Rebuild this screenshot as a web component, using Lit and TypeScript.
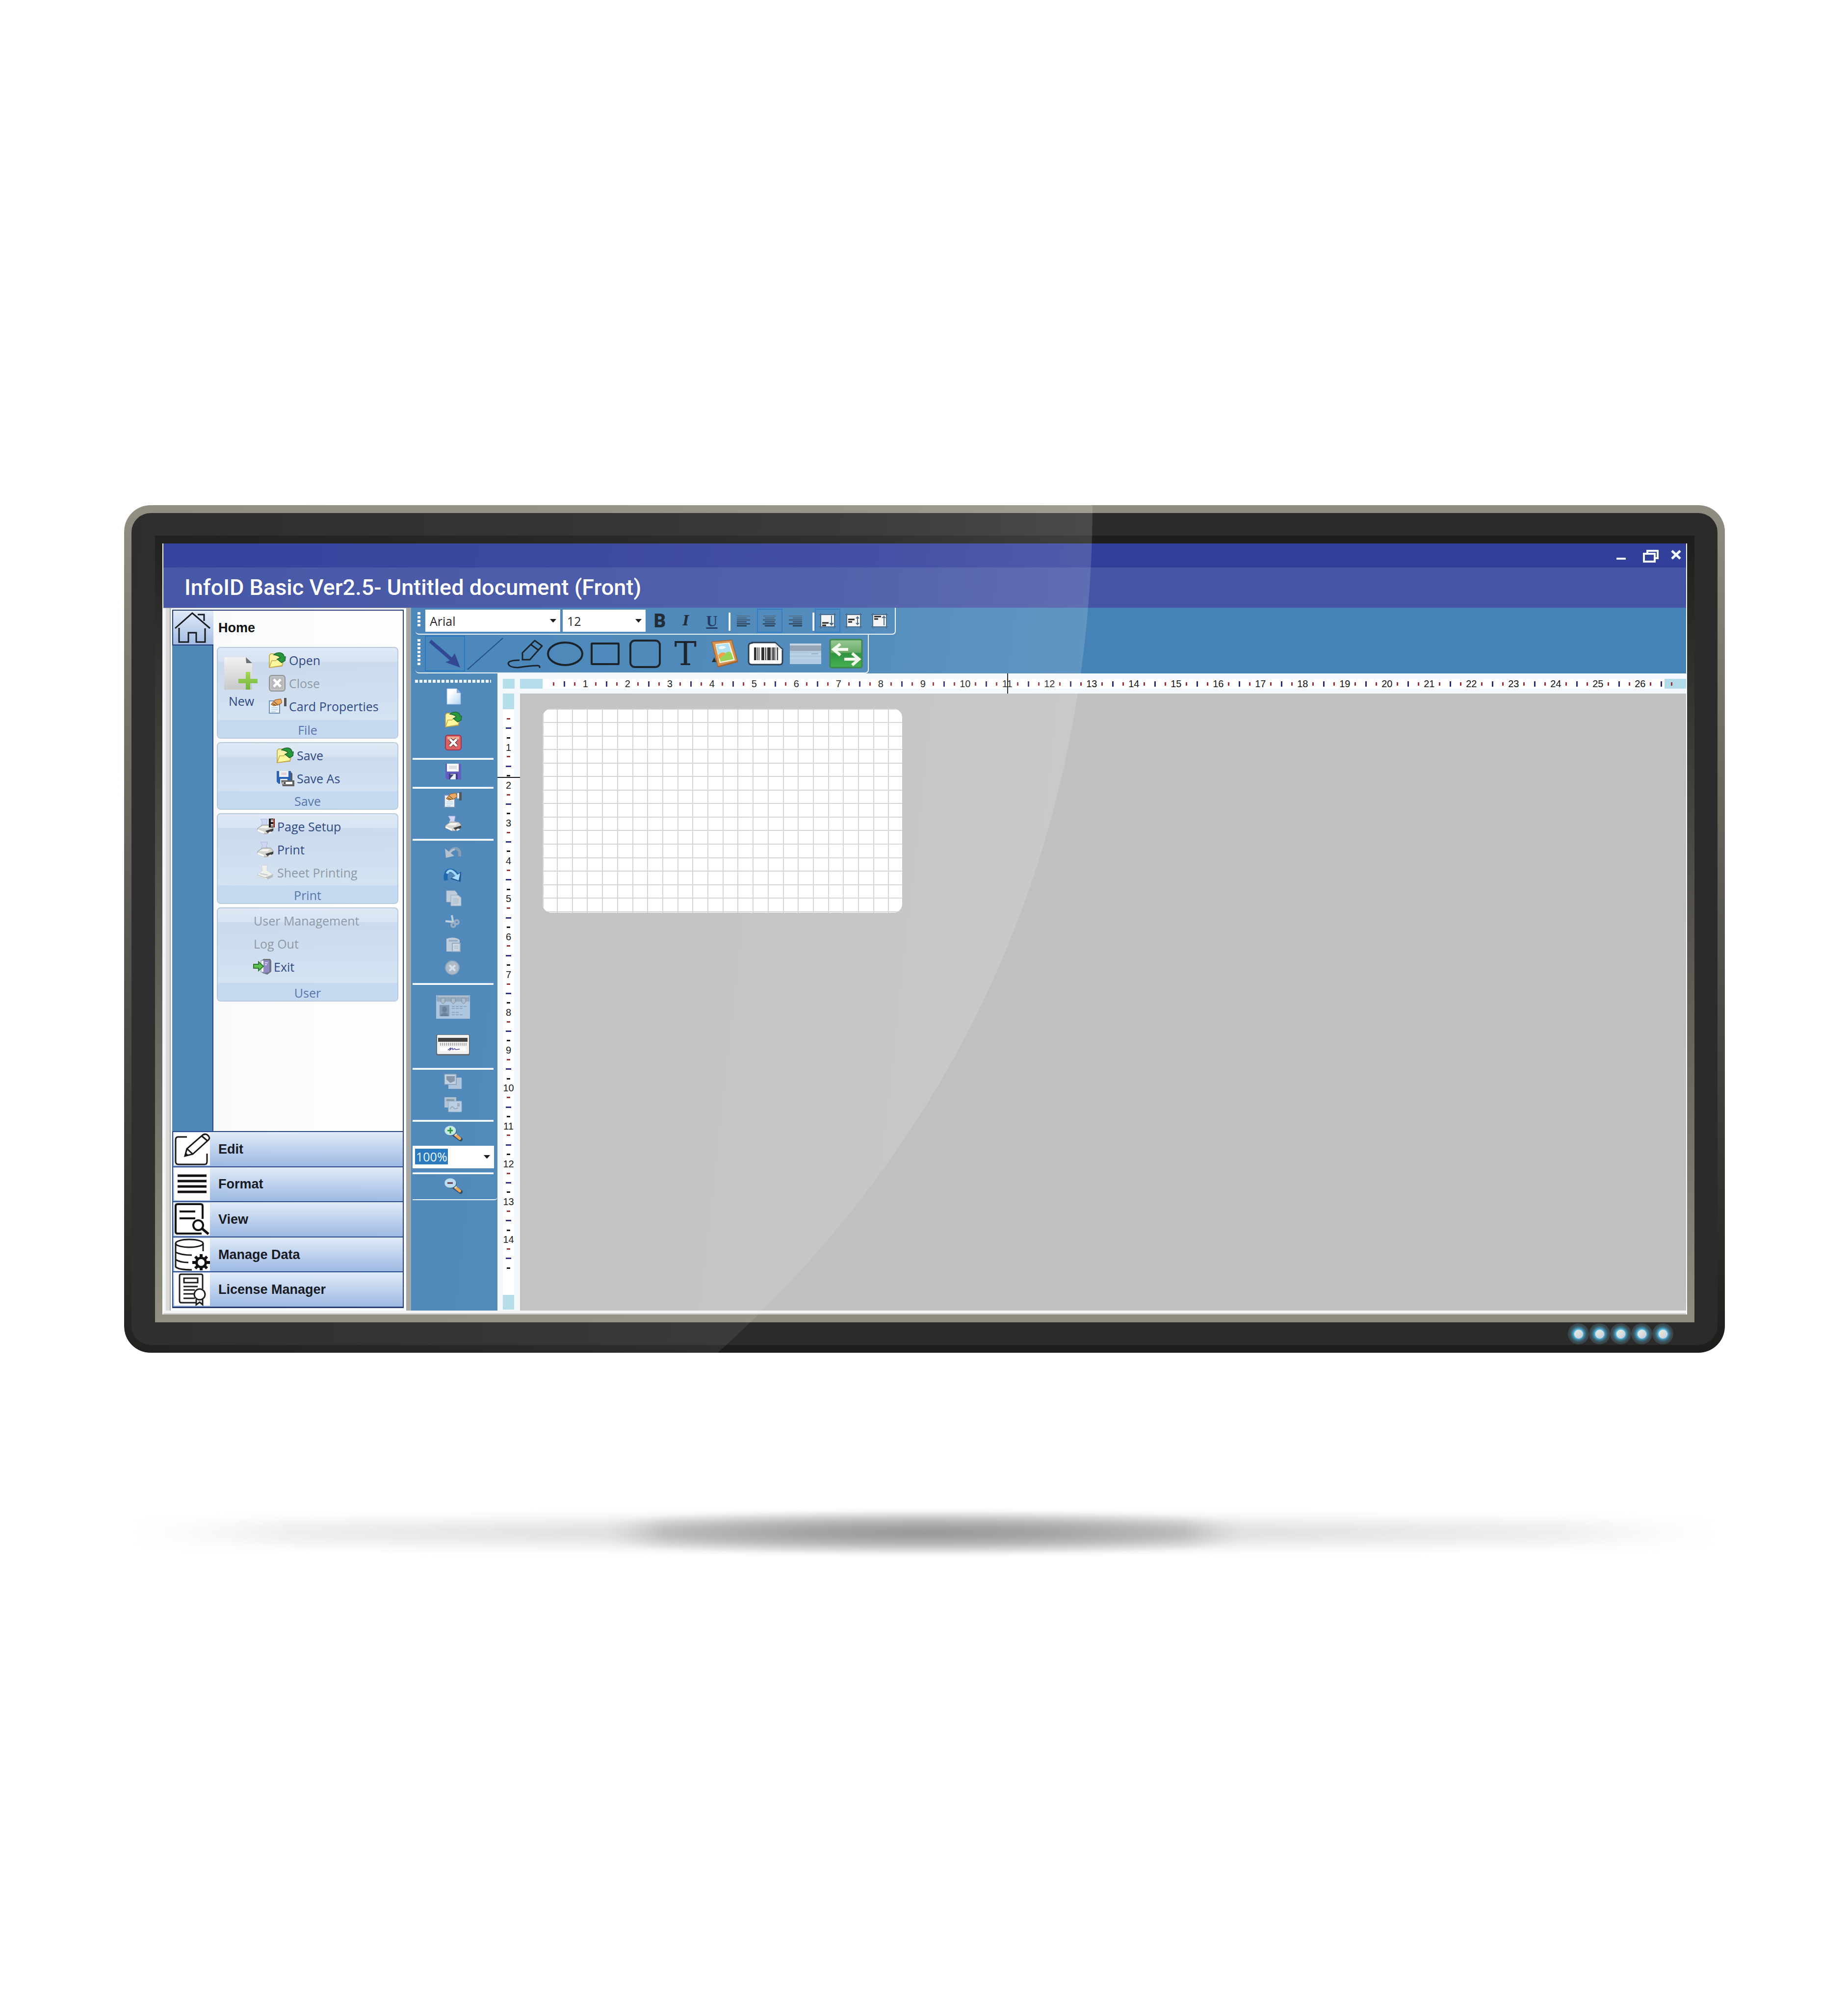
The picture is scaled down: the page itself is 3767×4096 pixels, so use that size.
import { LitElement, html, svg, css, nothing, TemplateResult } from "lit";
import { customElement, property } from "lit/decorators.js";
import { classMap } from "lit/directives/class-map.js";

/* ---------- icon drawings ---------- */

type Art = { w: number; h: number; art: TemplateResult };

const folder = svg`
  <path d="M1 31V6L4 3H12L15 6H24V12L30 17L27 28Z" fill="#fbf3a0" stroke="#b89c3c" stroke-width="1.5"/>
  <path d="M1 31L6 17H14L18 14H30L27 27Z" fill="#fff89a" stroke="#c2a548" stroke-width="1.5"/>
  <path d="M10 5Q16 0 24 1Q31 3 31 9L34 9L33 17L26 21L17 14L23 11Q20 6 10 5Z" fill="#219437" stroke="#17602a" stroke-width="1.5"/>`;

const printer = svg`
  <path d="M7 1H21L19 11L26 15H8L11 8Z" fill="#cfd4f2" stroke="#a9b3e2" stroke-width="1"/>
  <path d="M1 20L11 13H28L33 19V24L20 31H14L1 24Z" fill="#d3d3cf" stroke="#8d8d8d" stroke-width="1"/>
  <path d="M4 19L12 15H26L22 20Z" fill="#f4f4ef"/>
  <path d="M1 22L14 27V31L1 25Z" fill="#fff"/>
  <path d="M17 25L33 20V25L22 30Z" fill="#3c3c3c"/>
  <path d="M22 29L27 26L31 28L25 31Z" fill="#e8e8e8"/>`;

const handCard = svg`
  <path d="M1 6H22V31H1Z" fill="#edf3fb" stroke="#6d8db8" stroke-width="2"/>
  <path d="M5 20H18M5 24H18M5 28H14" stroke="#a9cdea" stroke-width="1.5"/>
  <path d="M5 13L13 4L24 2L27 9L20 14L10 16Z" fill="#eaa75c" stroke="#a4672c" stroke-width="1.5"/>
  <path d="M8 12L14 15M11 8L18 14" stroke="#6a4c2c" stroke-width="1.5"/>
  <path d="M27 2H31V13H27Z" fill="#e8e8e8"/>
  <path d="M31 0H36V17H31Z" fill="#4e4e4e"/>`;

const lens = (sign: TemplateResult, tint: string) => svg`
  <path d="M18 18L32 28" stroke="#24435e" stroke-width="8" stroke-linecap="round"/>
  <path d="M19 17L30 26" stroke="#e9a055" stroke-width="6" stroke-linecap="round"/>
  <path d="M19 16L23 19" stroke="#f5e6c8" stroke-width="4"/>
  <ellipse cx="13" cy="11" rx="11" ry="10" fill="#2d5a80"/>
  <ellipse cx="11" cy="10" rx="11" ry="9" fill="${tint}" stroke="#b9dcec" stroke-width="1.5"/>
  ${sign}`;

const bars = (rows: number[][]) => rows.map(
  ([x1, x2], i) => svg`<path d="M${x1} ${2 + i * 4}H${x2}" stroke="${["#47637c", "#3c566e", "#2f465c", "#22364a", "#18293a", "#0f1c2a"][i]}" stroke-width="2"/>`);

const cell = (inner: TemplateResult) => svg`
  <path d="M3 3H31V28H3Z" fill="#f2f4f6"/>
  <path d="M0 3H34M0 28H34M3 0V31M31 0V31" stroke="#3c5f80" stroke-width="2"/>
  ${inner}`;

const ART: Record<string, Art> = {
  home: { w: 73, h: 63, art: svg`
    <g fill="none" stroke="#101418" stroke-width="3">
      <path d="M1 33L36 2L72 33"/><path d="M47 5H60V18"/>
      <path d="M9 32V61H28V42H44V61H62V33"/></g>` },
  edit: { w: 73, h: 66, art: svg`
    <g fill="none" stroke="#111" stroke-width="3">
      <path d="M26 8H8Q3 8 3 14V58Q3 64 9 64H62Q67 64 67 58V42"/>
      <path d="M22 47L26 32L56 6Q62 0 68 4Q75 10 69 15L38 43Z"/>
      <path d="M26 32L38 43M56 6L68 16"/></g><path d="M22 48L24 40L29 45Z" fill="#111"/>` },
  format: { w: 73, h: 66, art: svg`
    <path d="M7 16H66M7 27H66M7 38H66M7 49H66" stroke="#0b0b0b" stroke-width="5"/>` },
  view: { w: 73, h: 66, art: svg`
    <g fill="none" stroke="#0d0d0d" stroke-width="4">
      <path d="M58 32V6Q58 2 54 2H7Q3 2 3 6V58Q3 62 7 62H56"/>
      <path d="M11 17H43M11 31H43"/>
      <circle cx="49" cy="45" r="10"/><path d="M57 52L70 63" stroke-width="5"/></g>` },
  data: { w: 73, h: 66, art: svg`
    <g fill="none" stroke="#111" stroke-width="3">
      <ellipse cx="31" cy="10" rx="28" ry="8"/>
      <path d="M3 10V58Q10 64 36 64M59 10V26M3 28Q14 34 36 34M3 43Q12 49 29 49"/></g>
    <g stroke="#0b0b0b" stroke-width="6">
      <path d="M55 32V65M37 49H73M43 37L67 61M67 37L43 61"/></g>
    <circle cx="55" cy="49" r="12" fill="#0b0b0b"/><circle cx="55" cy="49" r="7" fill="#fff"/>` },
  license: { w: 73, h: 66, art: svg`
    <g fill="none" stroke="#1a1717" stroke-width="3">
      <path d="M44 60H15Q11 60 11 56V5Q11 2 14 2H55Q58 2 58 5V32"/>
      <path d="M20 10H48V19H20Z"/>
      <path d="M19 27H48M19 34H42M19 42H40M19 51H42"/>
      <circle cx="52" cy="43" r="11" fill="#fff"/>
      <path d="M45 53V64L52 59L58 64V53"/></g>` },

  newDoc: { w: 69, h: 66, art: svg`
    <defs><linearGradient id="nd" x1="0" y1="0" x2="0" y2="1"><stop offset="0" stop-color="#f2f2f4"/><stop offset="1" stop-color="#c6c7c9"/></linearGradient>
    <linearGradient id="np" x1="0" y1="0" x2="0" y2="1"><stop offset="0" stop-color="#a2d651"/><stop offset="1" stop-color="#6cb33c"/></linearGradient></defs>
    <path d="M0 0H44L57 12V66H0Z" fill="url(#nd)"/><path d="M44 0L57 12H45Z" fill="#6a6d72"/>
    <path d="M44 30H53V44H68V53H53V66H44V53H29V44H44Z" fill="url(#np)"/>` },
  open: { w: 34, h: 32, art: folder },
  closeGray: { w: 34, h: 34, art: svg`
    <rect x="1" y="1" width="32" height="32" rx="5" fill="#b4b6b8" stroke="#8e9296" stroke-width="2"/>
    <path d="M10 9L24 24M24 9L10 24" stroke="#fff" stroke-width="5"/><rect x="4" y="4" width="26" height="26" rx="3" fill="none" stroke="#d2d4d6" stroke-width="1"/>` },
  props: { w: 37, h: 33, art: handCard },
  saveAs: { w: 36, h: 32, art: svg`
    <path d="M0 1H29V27H4L0 23Z" fill="#2360b4"/><path d="M29 3L32 6V26H28Z" fill="#555"/>
    <path d="M5 1H24V13H5Z" fill="#eef0f5"/><path d="M9 4H20V9H9Z" fill="#e4cfd3"/>
    <path d="M7 17H22V27H7Z" fill="#dfe5ef"/>
    <path d="M9 20H36V32H12Z" fill="#5c5c5c"/><path d="M12 23H32V28H12Z" fill="#fff"/><path d="M14 24L18 27M18 24L14 27" stroke="#222" stroke-width="2"/>` },
  pageSetup: { w: 37, h: 32, art: svg`${printer}
    <path d="M24 0H36V18H24Z" fill="#111"/><path d="M28 3H33M28 6H33M28 12H33M28 15H33" stroke="#fff" stroke-width="2"/><path d="M34 0V18" stroke="#d9381e" stroke-width="2"/>` },
  printer: { w: 34, h: 32, art: printer },
  sheet: { w: 34, h: 32, art: svg`
    <path d="M9 1H21L20 11L32 20V25L20 31L1 24L1 20L11 12Z" fill="#efefec" stroke="#cfd2d4" stroke-width="1"/>
    <path d="M1 21L16 27L33 20M6 18L22 21" stroke="#c4c7c8" stroke-width="2" fill="none"/><path d="M18 26L32 21V25L22 30Z" fill="#b5b8b9"/>` },
  exit: { w: 36, h: 32, art: svg`
    <path d="M16 4L20 0H34L36 4V26L28 32L18 29Z" fill="#6d7078"/><path d="M15 3H22V27H15Z" fill="#f4f5f8" stroke="#7a7d88"/>
    <path d="M20 3L32 3V27L20 29Z" fill="#8e86c4"/><path d="M23 8H29M23 12H27" stroke="#d9d6f0" stroke-width="2"/>
    <path d="M0 11H10V6L20 15L10 24V19H0Z" fill="#5cc04a" stroke="#27722a" stroke-width="2"/>` },

  sNew: { w: 34, h: 34, art: svg`
    <defs><linearGradient id="sn" x1="0" y1="0" x2="1" y2="1"><stop offset=".3" stop-color="#fff"/><stop offset="1" stop-color="#a7d2f3"/></linearGradient></defs>
    <path d="M4 1H24L32 10V33H4Z" fill="url(#sn)" stroke="#8fb0dc" stroke-width="1"/><path d="M24 1V10H32Z" fill="#8aa5dc"/>` },
  sClose: { w: 34, h: 32, art: svg`
    <rect x="1" y="1" width="32" height="30" rx="5" fill="#d95b5e" stroke="#a02c40" stroke-width="2"/>
    <path d="M5 4H29V9H5Z" fill="#eeaa90"/><path d="M10 9L24 23M24 9L10 23" stroke="#3c1014" stroke-width="7"/><path d="M10 9L24 23M24 9L10 23" stroke="#fff" stroke-width="5"/>` },
  sSave: { w: 34, h: 34, art: svg`
    <path d="M1 1H33V33H4L1 30Z" fill="#5c58bb"/><path d="M4 1H28V17H4Z" fill="#f7f8fc"/><path d="M8 5H24V12H8Z" fill="#dedfe4"/>
    <path d="M8 21H26V33H8Z" fill="#3a3490"/><path d="M11 22H22V33H11Z" fill="#e9ecf6"/><path d="M11 23H18L11 31Z" fill="#3c3a63"/>` },
  undo: { w: 34, h: 24, art: svg`
    <path d="M30 20Q32 3 19 4Q13 5 9 13" fill="none" stroke="#8199b0" stroke-width="6"/><path d="M0 4L2 23L19 19Z" fill="#b3bfcc"/><path d="M10 13Q14 6 20 6" fill="none" stroke="#b3bfcc" stroke-width="4"/>` },
  redo: { w: 34, h: 27, art: svg`
    <path d="M2 24Q-1 3 12 4Q20 5 25 14" fill="none" stroke="#1463ad" stroke-width="8"/><path d="M33 6L32 27L11 21Z" fill="#12508f"/>
    <path d="M4 10Q8 2 14 5Q20 8 23 14" fill="none" stroke="#9dd4f7" stroke-width="5"/><path d="M31 9L28 24L14 19Z" fill="#a6dafa"/>` },
  copy: { w: 34, h: 33, art: svg`
    <path d="M3 1H20L25 6V24H3Z" fill="#bdcad8" stroke="#96adc4" stroke-width="1"/><path d="M12 10H27L33 15V32H12Z" fill="#c3d0dd" stroke="#86a3bf" stroke-width="1"/>
    <path d="M16 18H28M16 22H28M16 26H28" stroke="#a3b7ca" stroke-width="1.5"/>` },
  cut: { w: 34, h: 28, art: svg`
    <path d="M1 13L19 15M14 1L17 18" stroke="#b9cde0" stroke-width="4"/><g fill="none" stroke="#93abc1" stroke-width="4"><circle cx="17" cy="21" r="4"/><circle cx="24" cy="15" r="4"/></g>` },
  paste: { w: 34, h: 30, art: svg`
    <path d="M3 3Q15 -2 27 3L30 6V29H3Z" fill="#bccad7"/><path d="M8 7H26" stroke="#8fa7bd" stroke-width="3"/><path d="M15 12H31V29H15Z" fill="#c7d3df" stroke="#8fa7bd" stroke-width="2"/><path d="M19 18H27M19 22H27" stroke="#a3b7ca" stroke-width="1.5"/>` },
  remove: { w: 34, h: 30, art: svg`
    <circle cx="15" cy="15" r="14" fill="#a9b8c6" stroke="#86a0b8" stroke-width="2"/><path d="M9 10L21 21M21 10L9 21" stroke="#d5dfe9" stroke-width="4"/>` },
  idCard: { w: 69, h: 49, art: svg`
    <path d="M0 1H69V49H0Z" fill="#a9c4dc"/><path d="M1 1H68V14H1Z" fill="#8fa5ba"/><path d="M3 2H66V5H3Z" fill="#a9bccd"/>
    ${[14, 35, 56].map(x => svg`<path d="M${x - 4} 7H${x + 4}V15L${x} 19L${x - 4} 15Z" fill="#aab9c6" stroke="#75899d" stroke-width="1"/>`)}
    <path d="M7 21H27V44H7Z" fill="#7e97af"/><ellipse cx="17" cy="30" rx="5" ry="6" fill="#627d97"/><path d="M9 44Q10 37 17 37Q25 37 25 44Z" fill="#627d97"/>
    <path d="M32 24H62M32 28H56M32 36H48M32 41H56" stroke="#7f9ab4" stroke-width="1.5" stroke-dasharray="6 2"/>` },
  magCard: { w: 69, h: 43, art: svg`
    <rect x="0" y="0" width="69" height="43" rx="3" fill="#5c6670"/><rect x="2" y="1" width="65" height="39" rx="2" fill="#f1f1ef"/>
    <path d="M4 7H64V15H4Z" fill="#3b3b3b"/><path d="M8 20H62" stroke="#a9a9a9" stroke-width="6" stroke-dasharray="2 2"/>
    <path d="M8 26H60V34H8Z" fill="#fff"/><path d="M24 32L30 27L28 32L33 28L34 31L38 29L40 31L48 30" fill="none" stroke="#39439a" stroke-width="1.5"/>` },
  front: { w: 37, h: 32, art: svg`
    <path d="M9 8H36V31H9Z" fill="#a9c3dc"/><path d="M1 1H25V22H1Z" fill="#bfcfdf" stroke="#7f9ab3" stroke-width="1.5"/><path d="M5 5H22V15L13 19L5 12Z" fill="#7f93a6"/>` },
  back: { w: 37, h: 32, art: svg`
    <path d="M1 1H25V22H1Z" fill="#aebfcf"/><path d="M5 5H21V9H5Z" fill="#8193a5"/><path d="M9 9H36V31H9Z" fill="#b7cde2" stroke="#8ba7c1" stroke-width="1"/><path d="M27 13H32V20H27Z" fill="#93a8bc"/><path d="M12 25L17 20L22 25L29 23" stroke="#93a8bc" stroke-width="2" fill="none"/>` },
  zoomIn: { w: 34, h: 31, art: lens(svg`<path d="M5 10H16M11 4V16" stroke="#1e8b3d" stroke-width="3"/>`, "#c6ecd9") },
  zoomOut: { w: 34, h: 31, art: lens(svg`<path d="M5 10H16" stroke="#5a2a35" stroke-width="3"/>`, "#b8daf0") },

  alignLeft: { w: 28, h: 24, art: svg`${bars([[0, 27], [0, 20], [0, 27], [0, 20], [0, 27], [0, 20]])}` },
  alignCenter: { w: 28, h: 24, art: svg`${bars([[1, 27], [4, 24], [0, 26], [4, 24], [0, 26], [4, 24]])}` },
  alignRight: { w: 28, h: 24, art: svg`${bars([[0, 27], [8, 27], [0, 27], [8, 27], [0, 27], [8, 27]])}` },
  vBottom: { w: 34, h: 31, art: cell(svg`<path d="M6 20H19M6 25H14" stroke="#111" stroke-width="3"/><path d="M25 5V23" stroke="#3c5f80" stroke-width="2"/><path d="M20 20H30L25 26Z" fill="#3c5f80"/>`) },
  vMiddle: { w: 34, h: 31, art: cell(svg`<path d="M6 13H19M6 18H14" stroke="#111" stroke-width="3"/><path d="M25 9V22" stroke="#3c5f80" stroke-width="2"/><path d="M21 11L25 6L29 11ZM21 20L25 25L29 20Z" fill="#3c5f80"/>`) },
  vTop: { w: 34, h: 31, art: cell(svg`<path d="M6 7H20M6 12H14" stroke="#111" stroke-width="3"/><path d="M26 7V25" stroke="#3c5f80" stroke-width="2"/><path d="M21 10L26 5L30 10Z" fill="#3c5f80"/>`) },

  arrow: { w: 66, h: 58, art: svg`
    <path d="M3 3L48 42" stroke="#2b4190" stroke-width="7"/><path d="M64 57L34 46L44 42L46 38L53 28Z" fill="#2b4190"/>` },
  line: { w: 74, h: 66, art: svg`<path d="M1 65L73 1" stroke="#1b4480" stroke-width="2"/>` },
  pencil: { w: 73, h: 58, art: svg`
    <g fill="none" stroke="#10181f" stroke-width="3" stroke-linejoin="round">
      <path d="M31 41V27L56 2L71 13L46 41Z"/><path d="M48 10L63 21"/>
      <path d="M25 42Q2 42 2 49Q4 57 22 57Q48 53 62 53Q67 53 66 58"/></g>` },
  ellipse: { w: 75, h: 50, art: svg`<ellipse cx="37" cy="25" rx="35" ry="23" fill="none" stroke="#10181f" stroke-width="4"/>` },
  rect: { w: 59, h: 46, art: svg`<rect x="2" y="2" width="55" height="42" rx="1" fill="none" stroke="#10181f" stroke-width="4"/>` },
  round: { w: 64, h: 58, art: svg`<rect x="2" y="2" width="60" height="54" rx="9" fill="none" stroke="#10181f" stroke-width="4"/>` },
  picture: { w: 58, h: 57, art: svg`
    <path d="M6 36L1 46H10Z" fill="#1f1f1f"/>
    <path d="M0 4L42 0L55 46L13 57Z" fill="#9c5a20"/><path d="M2 5L41 2L52 43L14 54Z" fill="#d38a42"/>
    <path d="M8 9L37 6L48 42L17 48Z" fill="#f4f3dc"/><path d="M10 11L35 8L42 32L15 36Z" fill="#a8def4"/>
    <path d="M15 15Q24 10 30 16Q22 21 16 19Z" fill="#eef9fd"/>
    <path d="M14 32Q20 24 28 27L30 36L16 39Z" fill="#f09a3c"/><path d="M17 38Q25 33 31 26Q37 22 41 28L45 40L19 45Z" fill="#93cf4a"/>` },
  barcode: { w: 73, h: 48, art: svg`
    <path d="M9 1H56L71 15V40Q71 46 65 46H9Q2 46 2 40V8Q2 2 9 2Z" fill="#fff" stroke="#1d2f42" stroke-width="3"/>
    <path d="M56 2L71 16H57Z" fill="#dfe3e6"/>
    ${[[13, 5], [20, 2], [24, 1], [28, 6], [36, 2], [40, 7], [49, 2], [52, 3], [57, 1], [60, 2]].map(([x, w]) => svg`<rect x="${x}" y="11" width="${w}" height="26" fill="#222"/>`)}` },
  stripe: { w: 64, h: 42, art: svg`
    <path d="M0 1H64V42H0Z" fill="#aac6e0"/><path d="M0 0H64V4H0Z" fill="#c1d0de"/><path d="M0 4H64V15H0Z" fill="#8c9eb0"/><path d="M0 22H64M0 30H64" stroke="#b9cfe4" stroke-width="3"/><path d="M44 21H58" stroke="#90a9c0" stroke-width="2"/>` },
  swap: { w: 67, h: 59, art: svg`
    <defs><linearGradient id="sw" x1="0" y1="0" x2="0" y2="1"><stop offset="0" stop-color="#8cc48c"/><stop offset=".45" stop-color="#5fa45c"/><stop offset=".5" stop-color="#1f8a30"/><stop offset="1" stop-color="#36ac44"/></linearGradient></defs>
    <rect x="1" y="1" width="65" height="57" rx="3" fill="url(#sw)" stroke="#2c8038" stroke-width="3"/>
    <path d="M38 21H10M22 10L8 21L22 33" fill="none" stroke="#f3f7ea" stroke-width="6"/>
    <path d="M30 41H58M46 29L60 41L46 53" fill="none" stroke="#f3f7ea" stroke-width="6"/>` },
  minimize: { w: 20, h: 24, art: svg`<path d="M0 18H19" stroke="#f4fbff" stroke-width="4"/>` },
  restore: { w: 32, h: 26, art: svg`
    <g fill="none" stroke="#f4fbff" stroke-width="4"><path d="M9 6V2H30V17H26"/><path d="M2 8H24V24H2Z"/></g>` },
  closeWin: { w: 22, h: 20, art: svg`<path d="M2 2L19 18M19 2L2 18" stroke="#f4fbff" stroke-width="5"/>` },
  caret: { w: 13, h: 7, art: svg`<path d="M0 0H13L7 7H6Z" fill="#111"/>` },
};

const icon = (name: string) => {
  const { w, h, art } = ART[name];
  return html`<svg width="${w}" height="${h}" viewBox="0 0 ${w} ${h}" aria-hidden="true">${art}</svg>`;
};

const reset = css`
  :host { display: block; box-sizing: border-box; }
  *, *::before, *::after { box-sizing: border-box; }
  button { margin: 0; padding: 0; border: 0; background: none; color: inherit; font: inherit; }
  svg { display: block; flex: none; overflow: visible; }
`;

/* ---------- accordion on the left ---------- */

type Item = { label: string; icon?: string; off?: boolean };
type Group = { title: string; cls: string; items: Item[]; big?: Item };

const GROUPS: Group[] = [
  { title: "File", cls: "file", big: { label: "New", icon: "newDoc" }, items: [
    { label: "Open", icon: "open" }, { label: "Close", icon: "closeGray", off: true }, { label: "Card Properties", icon: "props" }] },
  { title: "Save", cls: "save", items: [{ label: "Save", icon: "open" }, { label: "Save As", icon: "saveAs" }] },
  { title: "Print", cls: "print", items: [
    { label: "Page Setup", icon: "pageSetup" }, { label: "Print", icon: "printer" }, { label: "Sheet Printing", icon: "sheet", off: true }] },
  { title: "User", cls: "user", items: [
    { label: "User Management", off: true }, { label: "Log Out", off: true }, { label: "Exit", icon: "exit" }] },
];

const SECTIONS = [["Edit", "edit"], ["Format", "format"], ["View", "view"], ["Manage Data", "data"], ["License Manager", "license"]];

@customElement("side-panel")
export class SidePanel extends LitElement {
  static styles = [reset, css`
    :host {
      display: flex; padding: 4px 15px 5px 18px;
      background:
        linear-gradient(#a3a5a4, #a3a5a4) right / 10px 100% no-repeat,
        linear-gradient(#a5a8ac, #a5a8ac) top / 100% 1px no-repeat,
        linear-gradient(90deg, #f2f5f7 5px, #dadada 5px 13px, #a5a8a8 13px 15px, #f7fbff 15px);
    }
    .panel { flex: 1; display: flex; flex-direction: column; border: 2px solid #1f356f; border-width: 2px 2px 3px 0; }
    .home { flex: 1; display: grid; grid-template-columns: 84px 1fr; }
    .rail { display: flex; flex-direction: column; }
    .tab { height: 71px; display: flex; align-items: center; padding-left: 3px; border-left: 2px solid #1f356f; border-bottom: 2px solid #1f356f; background: linear-gradient(#dfeaf8, #a3bce4); }
    .fill { flex: 1; background: #4a85b7; border-right: 2px solid #24428a; }
    .content { background: linear-gradient(90deg, #f8fafb, #fff); padding-right: 9px; padding-left: 7px; display: flex; flex-direction: column; gap: 7px; }
    h2 { margin: 0; height: 67px; padding: 3px 0 0 3px; font: bold 27px/64px "Liberation Sans", Arial, sans-serif; color: #0c0c0c; }
    .group { display: flex; flex-direction: column; border: 2px solid #b7c8dc; border-radius: 8px; overflow: hidden; font: 25px/34px "Open Sans", "Segoe UI", sans-serif; color: #2b4480;
      background: linear-gradient(#dfe9f6, #d5e2f2 28px, #c9d9ec 29px, #d5e5f4); }
    .file { height: 187px; } .save { height: 138px; } .print { height: 185px; } .user { height: 192px; }
    .items { flex: 1; padding-top: 1px; display: flex; }
    .list { display: flex; flex-direction: column; align-items: flex-start; }
    .file .list { padding-left: 23px; }
    .save .list { padding-left: 120px; }
    .print .list { padding-left: 80px; }
    .user .list { padding-left: 73px; }
    .item { height: 47px; display: flex; align-items: center; gap: 5px; white-space: nowrap; }
    .item .pic { width: 36px; display: flex; justify-content: flex-start; }
    .off { color: #8c97a3; }
    .big { width: 81px; padding: 18px 0 0 13px; display: flex; flex-direction: column; align-items: flex-start; gap: 6px; }
    .big span { padding-left: 9px; }
    .foot { height: 36px; text-align: center; line-height: 40px; background: #c3d8f0; color: #5472a8; }
    .sections { display: grid; grid-template-rows: repeat(5, 1fr); height: 358px; }
    .section { display: flex; align-items: center; gap: 17px; text-align: left; border: 2px solid #24428a; border-width: 2px 0 0 2px; padding-left: 2px;
      font: bold 27px/32px "Liberation Sans", Arial, sans-serif; color: #10141c; background: linear-gradient(#dfebf9, #9ab6e1); }
    .section .pic { background: #fff; }
  `];

  private item(i: Item) {
    return html`<button class=${classMap({ item: true, off: !!i.off })} ?disabled=${!!i.off}>
      ${i.icon ? html`<span class="pic">${icon(i.icon)}</span>` : nothing}<span>${i.label}</span></button>`;
  }

  render() {
    return html`<nav class="panel">
      <div class="home">
        <div class="rail"><div class="tab">${icon("home")}</div><div class="fill"></div></div>
        <div class="content">
          <h2>Home</h2>
          ${GROUPS.map(g => html`<section class="group ${g.cls}">
            <div class="items">
              ${g.big ? html`<button class="big">${icon(g.big.icon!)}<span>${g.big.label}</span></button>` : nothing}
              <div class="list">${g.items.map(i => this.item(i))}</div>
            </div>
            <div class="foot">${g.title}</div>
          </section>`)}
        </div>
      </div>
      <div class="sections">
        ${SECTIONS.map(([t, i]) => html`<button class="section"><span class="pic">${icon(i)}</span>${t}</button>`)}
      </div>
    </nav>`;
  }
}

/* ---------- top toolbars ---------- */

const TOOLS = [["arrow", "Select"], ["line", "Line"], ["pencil", "Freehand"], ["ellipse", "Ellipse"], ["rect", "Rectangle"], ["round", "Rounded rectangle"],
  ["text", "Text"], ["picture", "Picture"], ["barcode", "Barcode"], ["stripe", "Magnetic stripe"], ["swap", "Swap sides"]];

@customElement("top-bars")
export class TopBars extends LitElement {
  static styles = [reset, css`
    :host { background: #4583b7; padding-left: 9px; }
    .bar { display: flex; align-items: stretch; width: fit-content; border: 2px solid #eaf3fa; border-width: 0 2px 2px 0; border-radius: 0 0 7px 7px; }
    .fmt { height: 55px; padding: 2px 5px 2px 4px; gap: 1px; }
    .draw { height: 79px; padding: 2px 4px 2px 4px; }
    .grip { width: 6px; margin: 7px 9px 0 0; background: linear-gradient(#eef5fb 5px, #4583b700 5px) 0 0 / 6px 8px; }
    .g4 { height: 32px; } .g7 { height: 56px; }
    .combo { display: grid; align-items: center; margin: 2px 0; background: #fff; }
    .combo > * { grid-area: 1 / 1; }
    .combo svg { justify-self: end; margin-right: 8px; pointer-events: none; }
    .font { width: 275px; } .size { width: 169px; margin-left: 4px; margin-right: 2px; }
    select { appearance: none; width: 100%; height: 100%; border: 0; border-radius: 0; padding: 0 9px; background: none; color: #1d1d1f; font: 25px/36px "Open Sans", "Segoe UI", sans-serif; }
    .btn { width: 52px; display: flex; align-items: center; justify-content: center; border: 2px solid transparent; color: #14202c; }
    .on { border-color: #2273c0; }
    .sep { width: 4px; margin: 8px 0 4px 7px; background: linear-gradient(90deg, #b9d4ea 1px, #fff 1px); }
    .b { font: 900 38px/44px Roboto, sans-serif; }
    .i { font: italic bold 27px/40px "DejaVu Serif", serif; }
    .u { font: bold 32px/40px "Liberation Serif", serif; text-decoration: underline; text-decoration-thickness: 3px; color: #14305a; }
    .tools { width: 899px; display: grid; grid-template-columns: repeat(11, 1fr); }
    .tool { display: flex; align-items: center; justify-content: center; border: 2px solid transparent; }
    .tool.on { border-color: #2273c0; }
    .t { font: 68px/66px "DejaVu Serif", serif; color: #10181f; }
  `];

  private btn(name: string, label: string, on = false) {
    return html`<button class=${classMap({ btn: true, on })} aria-label=${label}>${icon(name)}</button>`;
  }

  render() {
    return html`
      <div class="bar fmt" role="toolbar" aria-label="Text format">
        <span class="grip g4"></span>
        <span class="combo font"><select aria-label="Font"><option>Arial</option></select>${icon("caret")}</span>
        <span class="combo size"><select aria-label="Font size"><option>12</option></select>${icon("caret")}</span>
        <button class="btn b" aria-label="Bold">B</button>
        <button class="btn i" aria-label="Italic">I</button>
        <button class="btn u" aria-label="Underline">U</button>
        <span class="sep"></span>
        ${this.btn("alignLeft", "Align left")}${this.btn("alignCenter", "Align center", true)}${this.btn("alignRight", "Align right")}
        <span class="sep"></span>
        ${this.btn("vBottom", "Align bottom", true)}${this.btn("vMiddle", "Align middle")}${this.btn("vTop", "Align top")}
      </div>
      <div class="bar draw" role="toolbar" aria-label="Drawing">
        <span class="grip g7"></span>
        <div class="tools">${TOOLS.map(([n, l], i) => html`
          <button class=${classMap({ tool: true, on: i === 0 })} aria-label=${l}>${n === "text" ? html`<span class="t">T</span>` : icon(n)}</button>`)}
        </div>
      </div>`;
  }
}

/* ---------- vertical tool strip ---------- */

@customElement("tool-strip")
export class ToolStrip extends LitElement {
  static styles = [reset, css`
    :host { background: #4a85b7; }
    .strip { display: flex; flex-direction: column; padding: 13px 0 4px; border-bottom: 2px solid #eaf3fa; border-radius: 8px 8px 6px 0; margin-left: 3px; }
    .grip { height: 6px; margin: 0 13px 4px 5px; background: linear-gradient(90deg, #eef5fb 6px, #4a85b700 6px) 0 0 / 9px 6px; }
    .tool { height: 47px; display: flex; align-items: center; justify-content: center; padding-right: 8px; }
    .large { height: 78px; }
    .sep { height: 4px; margin: 8px 8px 0 0; background: linear-gradient(#b9d4ea 1px, #fff 1px); }
    .gap { margin-bottom: 5px; }
    .zoom { height: 46px; margin: 2px 7px 0 0; padding: 6px 8px 8px 5px; background: #fff; display: flex; align-items: center; justify-content: space-between; }
    input { width: 67px; height: 32px; border: 0; padding: 0 0 0 2px; background: #2374bb; color: #e9f6ff; font: 25px/32px "Open Sans", "Segoe UI", sans-serif; }
  `];

  private tools(names: string[], large = false) {
    return names.map(n => html`<button class=${classMap({ tool: true, large })} aria-label=${n}>${icon(n)}</button>`);
  }

  render() {
    const sep = html`<div class="sep"></div>`;
    return html`<div class="strip" role="toolbar" aria-label="Document">
      <div class="grip"></div>
      ${this.tools(["sNew", "open", "sClose"])}${sep}
      ${this.tools(["sSave"])}${sep}
      ${this.tools(["props", "printer"])}${sep}
      ${this.tools(["undo", "redo", "copy", "cut", "paste", "remove"])}
      <div class="sep gap"></div>
      ${this.tools(["idCard", "magCard"], true)}${sep}
      ${this.tools(["front", "back"])}${sep}
      ${this.tools(["zoomIn"])}
      <div class="zoom"><input aria-label="Zoom" value="100%"><button aria-label="Zoom levels">${icon("caret")}</button></div>${sep}
      ${this.tools(["zoomOut"])}
    </div>`;
  }
}

/* ---------- rulers ---------- */

@customElement("ruler-bar")
export class RulerBar extends LitElement {
  @property({ type: Boolean, reflect: true }) vertical = false;
  @property({ type: Number }) count = 1;

  static styles = [reset, css`
    :host { position: relative; background: #f2f8fd; padding: 11px 0; font: 20px/20px "Liberation Sans", Arial, sans-serif; color: #101214; }
    .band { height: 20px; background: #fff; display: flex; }
    .end { background: #b1dbe9; width: 46px; flex: none; }
    .tail { flex: 1; display: flex; min-width: 0; padding-left: 12px; background: linear-gradient(#b1dbe9, #b1dbe9) right / 47px 100% no-repeat; }
    .last { display: none; }
    .units { display: flex; }
    .extra { display: grid; }
    .unit { flex: none; width: 86px; display: grid; grid-template: minmax(0, 1fr) / repeat(4, minmax(0, 1fr)); align-items: center; justify-items: center; }
    .unit i { width: 3px; height: 7px; background: #9c3036; }
    .unit i.mid { width: 3px; height: 11px; background: #27297c; }
    .unit b { font-weight: normal; white-space: nowrap; width: 24px; text-align: center; }
    .mark { position: absolute; background: #111; width: 2px; top: 0; bottom: 0; left: 993px; }

    :host([vertical]) { padding: 0 11px; }
    :host([vertical]) .band { width: 23px; height: auto; flex-direction: column; min-height: 1256px; }
    :host([vertical]) .end { width: auto; height: 32px; }
    :host([vertical]) .tail { flex-direction: column; padding: 10px 0 0; background: none; }
    :host([vertical]) .last { display: block; height: 30px; background: #b1dbe9; }
    :host([vertical]) .units { height: 1081px; display: grid; grid-auto-rows: minmax(0, 1fr); }
    :host([vertical]) .unit { width: auto; grid-template: repeat(4, minmax(0, 1fr)) / minmax(0, 1fr); }
    :host([vertical]) .unit i { width: 7px; height: 3px; }
    :host([vertical]) .unit i.mid { width: 11px; height: 3px; }
    :host([vertical]) .unit i.dark { background: #111; }
    :host([vertical]) .extra { height: 77px; }
    :host([vertical]) .mark { width: auto; height: 2px; left: 0; right: 0; top: 170px; bottom: auto; }
  `];

  render() {
    const ticks = html`<i></i><i class="mid"></i><i class="dark"></i>`;
    return html`<div class="band">
        <span class="end"></span>
        <div class="tail">
          <div class="units">${Array.from({ length: this.count }, (_, n) => html`<span class="unit">${ticks}<b>${n + 1}</b></span>`)}</div>
          <div class="extra"><span class="unit">${ticks}</span></div>
        </div>
        <span class="last"></span>
      </div>
      <span class="mark"></span>`;
  }
}

/* ---------- card canvas ---------- */

@customElement("card-canvas")
export class CardCanvas extends LitElement {
  static styles = [reset, css`
    :host { background: #c0c0c0; padding: 31px 46px; }
    .card { display: block; border-radius: 18px; background: #fff; overflow: hidden; }
  `];
  render() {
    const xs = Array.from({ length: 23 }, (_, i) => Math.round(30 + i * 30.7));
    const ys = Array.from({ length: 15 }, (_, i) => Math.round(28 + i * 27.55));
    return html`<svg class="card" width="733" height="416" viewBox="0 0 733 416" role="img" aria-label="Card front">
      <path d="${xs.map(x => `M${x} 0V416`).join("")}${ys.map(y => `M0 ${y}H733`).join("")}M1 0V416M0 1H733" stroke="#d3d3d3" stroke-width="2" fill="none"/></svg>`;
  }
}

/* ---------- monitor ---------- */

@customElement("app-root")
export class AppRoot extends LitElement {
  static styles = [reset, css`
    :host { min-height: 100vh; background: #fff; padding: 1030px 251px 0 253px; overflow: hidden; }
    .monitor { position: relative; border-radius: 54px; padding: 16px 15px; background: linear-gradient(#908d80, #1d1d1b); }
    .face { border-radius: 39px; background: #2b2b2b; padding: 46px 47px 0 48px; }
    .bezel { padding: 16px 15px; background: linear-gradient(#1d1d1b, #908d80); }
    .screen { border: 2px solid #fff; border-width: 0 2px; background: #fff; }
    .caption { height: 49px; background: #32409b; display: flex; justify-content: flex-end; align-items: flex-start; gap: 25px; padding: 13px 9px 0 0; }
    .caption .min { margin-right: 9px; }
    .title { height: 82px; background: #4455a5; margin: 0; padding-left: 43px; font: 500 45px/82px Roboto, sans-serif; color: #fff; white-space: nowrap; }
    .work { display: grid; grid-template-columns: 505px 1fr; min-height: 1433px; }
    .right { display: grid; grid-template-rows: 134px 1fr; min-width: 0; }
    .desk { display: grid; grid-template: 41px 1fr / 176px 46px 1fr; min-width: 0; }
    .strip { grid-row: 1 / 3; }
    .corner { background: #f2f8fd; padding: 11px 11px 10px; }
    .corner span { display: block; height: 100%; background: #b1dbe9; }
    .hruler { display: grid; min-width: 0; overflow: hidden; }
    .status { height: 8px; background: linear-gradient(#f3f5f4 5px, #cfd1d0 5px); }
    .leds { height: 46px; display: flex; justify-content: flex-end; align-items: center; padding: 1px 43px 0 0; }
    .led { width: 43px; height: 43px; flex: none; display: grid; place-items: center; border-radius: 50%; background: radial-gradient(circle closest-side, #5cc0ea 42%, #3f7f98 58%, #3a5058 78%, #3b4144 100%); }
    .led::after { content: ""; width: 18px; height: 18px; border-radius: 50%; background: linear-gradient(135deg, #eeeedd, #c2cbdd); }
    .glare { position: absolute; inset: 0; width: 100%; height: 100%; pointer-events: none; }
    .shadow { height: 104px; margin: 315px 10px 0; display: grid; }
    .shadow > * { grid-area: 1 / 1; }
    .wide { background: radial-gradient(ellipse 2400px 50px, #dededd, #e3e3e2 30%, #f0f0f0 56%, #fafafa 80%, #ffffff00);
      mask-image: linear-gradient(90deg, transparent, #000 10%, #000 90%, transparent); }
    .core { margin: 0 30%; background: radial-gradient(ellipse 1050px 50px, #999998, #a6a5a4 24%, #bcbab9 48%, #dad9d9 70%, #f5f5f5 88%, #ffffff00);
      mask-image: linear-gradient(90deg, transparent, #000 9%, #000 91%, transparent); }
  `];

  render() {
    return html`
      <div class="monitor">
        <div class="face">
          <div class="bezel">
            <main class="screen">
              <div class="caption">
                <button class="min" aria-label="Minimize">${icon("minimize")}</button>
                <button aria-label="Restore">${icon("restore")}</button>
                <button aria-label="Close">${icon("closeWin")}</button>
              </div>
              <h1 class="title">InfoID Basic Ver2.5- Untitled document (Front)</h1>
              <div class="work">
                <side-panel></side-panel>
                <div class="right">
                  <top-bars></top-bars>
                  <div class="desk">
                    <tool-strip class="strip"></tool-strip>
                    <div class="corner"><span></span></div>
                    <div class="hruler"><ruler-bar count="26"></ruler-bar></div>
                    <ruler-bar vertical count="14"></ruler-bar>
                    <card-canvas></card-canvas>
                  </div>
                </div>
              </div>
              <div class="status"></div>
            </main>
          </div>
          <div class="leds">${[1, 2, 3, 4, 5].map(() => html`<span class="led"></span>`)}</div>
        </div>
        <svg class="glare" viewBox="0 0 3263 1728" preserveAspectRatio="none" aria-hidden="true">
          <defs><linearGradient id="g" gradientUnits="userSpaceOnUse" x1="0" y1="0" x2="1975" y2="220">
            <stop offset="0" stop-color="#fff" stop-opacity=".015"/><stop offset=".45" stop-color="#fff" stop-opacity=".045"/>
            <stop offset=".75" stop-color="#fff" stop-opacity=".08"/><stop offset="1" stop-color="#fff" stop-opacity=".15"/></linearGradient></defs>
          <path d="M54 0H1974C1972 640 1740 1250 1210 1728H54Q0 1728 0 1674V54Q0 0 54 0Z" fill="url(#g)"/>
        </svg>
      </div>
      <div class="shadow"><div class="wide"></div><div class="core"></div></div>`;
  }
}
